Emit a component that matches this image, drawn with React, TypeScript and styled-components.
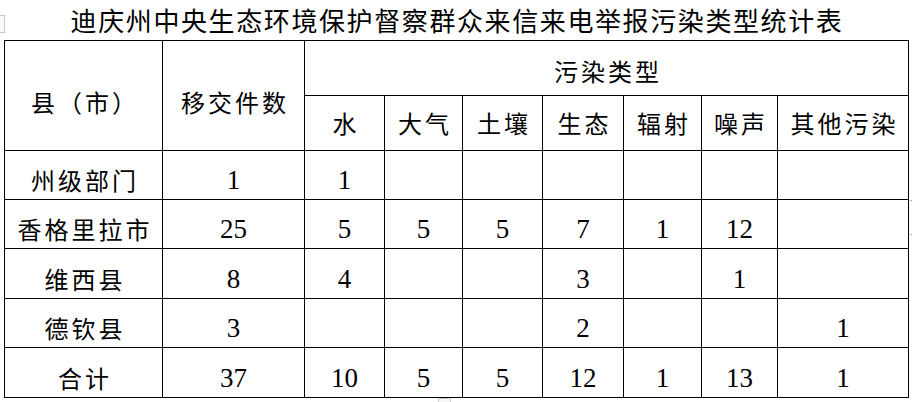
import React from "react";
import styled, { createGlobalStyle } from "styled-components";

const GlobalStyle = createGlobalStyle`
  html, body {
    margin: 0;
    padding: 0;
    background: #ffffff;
  }
  * {
    box-sizing: border-box;
  }
`;

const Page = styled.div`
  position: relative;
  width: 912px;
  height: 402px;
  background: #ffffff;
  color: #000000;
  overflow: hidden;
`;

const Title = styled.h1`
  margin: 0;
  height: 40px;
  line-height: 40px;
  padding-left: 2px;
  text-align: center;
  font-family: "Noto Sans CJK SC", "Noto Sans", sans-serif;
  font-size: 26px;
  font-weight: 400;
  letter-spacing: 1.6px;
  white-space: nowrap;
`;

const Grid = styled.div`
  margin-left: 4px;
  width: 905px;
  display: grid;
  grid-template-columns: 158px 142px 80px 78px 80px 81px 78px 76px 131px;
  grid-template-rows: 55px 55px 49px 49px 50px 49px 50px;
  border-top: 1px solid #000;
  border-left: 1px solid #000;
`;

const Cell = styled.div<{ $top?: number; $rowSpan?: number; $colSpan?: number }>`
  display: flex;
  align-items: center;
  justify-content: center;
  border-right: 1px solid #000;
  border-bottom: 1px solid #000;
  padding-top: ${(p) => p.$top ?? 10}px;
  grid-row: ${(p) => (p.$rowSpan ? `span ${p.$rowSpan}` : "auto")};
  grid-column: ${(p) => (p.$colSpan ? `span ${p.$colSpan}` : "auto")};
  font-family: "Liberation Serif", "Noto Sans CJK SC", serif;
  font-size: 27px;
  line-height: 30px;
  white-space: nowrap;
`;

const Han = styled.span`
  font-family: "Noto Sans CJK SC", serif;
  font-size: 24px;
  letter-spacing: 3px;
  margin-left: 3px;
`;

const MoveHandle = styled.div`
  position: absolute;
  left: 0;
  top: 15px;
  width: 5px;
  height: 18px;
  border: 1px solid #c9c9c9;
  border-left: none;
  background: #fafafa;
`;

const ResizeHandle = styled.div`
  position: absolute;
  left: 438px;
  top: 398px;
  width: 13px;
  height: 6px;
  border: 1px solid #cfcfcf;
  background: #f6f6f6;
`;

const Tick = styled.div<{ $y: number }>`
  position: absolute;
  left: 910px;
  top: ${(p) => p.$y}px;
  width: 2px;
  height: 1px;
  background: #b0b0b0;
`;

const subHeaders = ["水", "大气", "土壤", "生态", "辐射", "噪声", "其他污染"];

const rows: string[][] = [
  ["州级部门", "1", "1", "", "", "", "", "", ""],
  ["香格里拉市", "25", "5", "5", "5", "7", "1", "12", ""],
  ["维西县", "8", "4", "", "", "3", "", "1", ""],
  ["德钦县", "3", "", "", "", "2", "", "", "1"],
  ["合计", "37", "10", "5", "5", "12", "1", "13", "1"],
];

const isHan = (s: string) => /[\u3000-\u9fff\uff00-\uffef]/.test(s);
const content = (s: string) => (isHan(s) ? <Han>{s}</Han> : s);

export default function App() {
  return (
    <>
      <GlobalStyle />
      <Page>
        <Title>迪庆州中央生态环境保护督察群众来信来电举报污染类型统计表</Title>
        <Grid>
          <Cell $rowSpan={2} $top={12}>{content("县（市）")}</Cell>
          <Cell $rowSpan={2} $top={12}>{content("移交件数")}</Cell>
          <Cell $colSpan={7} $top={5}>{content("污染类型")}</Cell>
          {subHeaders.map((h) => (
            <Cell key={h} $top={0}>
              {content(h)}
            </Cell>
          ))}
          {rows.map((r, i) =>
            r.map((v, j) => <Cell key={`${i}-${j}`}>{content(v)}</Cell>)
          )}
        </Grid>
        <MoveHandle />
        <ResizeHandle />
        <Tick $y={200} />
        <Tick $y={234} />
      </Page>
    </>
  );
}
